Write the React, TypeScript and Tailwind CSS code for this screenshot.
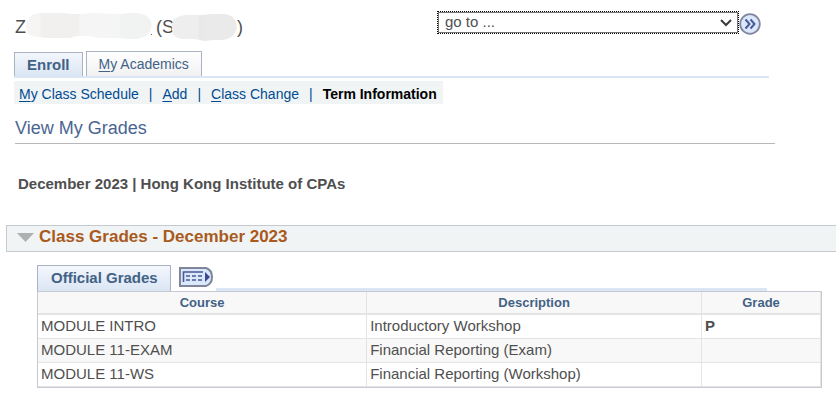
import type { ReactNode } from "react";

const grades = [
  { course: "MODULE INTRO", description: "Introductory Workshop", grade: "P" },
  { course: "MODULE 11-EXAM", description: "Financial Reporting (Exam)", grade: "" },
  { course: "MODULE 11-WS", description: "Financial Reporting (Workshop)", grade: "" },
];

function NavLink({ hotkey, children }: { hotkey: string; children: ReactNode }) {
  return (
    <a href="#" className="text-[#004b91]">
      <span className="underline underline-offset-2">{hotkey}</span>
      {children}
    </a>
  );
}

function Separator() {
  return <span className="px-[10px] text-[#004b91]">|</span>;
}

function Header() {
  return (
    <header className="flex items-start justify-between pl-[15px] pr-[75px] pt-[9px]">
      <h1 className="mt-[2px] flex h-8 items-center text-[18px] leading-8 text-[#4f4f4f]">
        <span>Z</span>
        {/* Hidden student name */}
        <svg className="h-7 w-[130px]" viewBox="0 0 130 28" aria-hidden="true">
          <defs>
            <linearGradient id="nameMask">
              <stop offset="0.1" stopColor="#f6f5f4" />
              <stop offset="0.13" stopColor="#f2f0ee" />
              <stop offset="0.42" stopColor="#f2f0ee" />
              <stop offset="0.43" stopColor="#f5f5f5" />
              <stop offset="0.73" stopColor="#f5f5f5" />
              <stop offset="0.76" stopColor="#f1f3f3" />
            </linearGradient>
          </defs>
          <path
            fill="url(#nameMask)"
            d="M2 7Q4 1 13 0h25l6 1h12l8-1 30 1 10-1h8q9 1 13 8 2 6-2 12-4 5-12 6h-9l-8-1H72l-8-2H50l-6 2H20l-7-1Q5 24 1 19l-1-6z"
          />
          <path d="M125 21h1v1h-1z" fill="#6b6b6b" />
        </svg>
        <span>(S</span>
        {/* Hidden student number */}
        <svg className="-ml-1 h-7 w-[69px]" viewBox="0 0 69 28" aria-hidden="true">
          <defs>
            <linearGradient id="idMask">
              <stop offset="0.4" stopColor="#eeeeee" />
              <stop offset="0.43" stopColor="#e8e8e8" />
              <stop offset="0.6" stopColor="#eaeaea" />
            </linearGradient>
          </defs>
          <path
            fill="url(#idMask)"
            d="M4 6Q8 3 15 2h18l8-1h14q8 1 11 8 2 6-1 11-4 6-12 7H43l-8 1-10-2H14Q6 26 3 21q-3-8 1-15z"
          />
        </svg>
        <span className="-ml-[2px]">)</span>
      </h1>

      <div className="flex items-center">
        <div className="relative">
          <select
            aria-label="go to"
            className="block h-[21px] w-[300px] appearance-none border border-[#767676] bg-white pl-[6px] text-[15px] leading-[18px] text-[#4f4f4f] outline-1 outline-dotted outline-black"
          >
            <option>go to ...</option>
          </select>
          <svg
            className="pointer-events-none absolute right-[6px] top-[7px] h-2 w-3"
            viewBox="0 0 12 8"
            fill="none"
            stroke="#3b3b3b"
            strokeWidth="2"
            aria-hidden="true"
          >
            <path d="M1 1l5 5 5-5" />
          </svg>
        </div>
        <button type="button" aria-label="Go" className="ml-px mt-1">
          <svg className="block size-[22px]" viewBox="0 0 22 22" fill="none" aria-hidden="true">
            <circle cx="11" cy="11" r="9.8" fill="#dbe7fb" stroke="#8087a0" strokeWidth="1.8" />
            <path d="M6.5 6.5l4 4.5-4 4.5M11.5 6.5l4 4.5-4 4.5" stroke="#4a5a96" strokeWidth="2" />
          </svg>
        </button>
      </div>
    </header>
  );
}

function Tabs() {
  return (
    <nav className="ml-[14px] mr-[67px] mt-2 flex items-end gap-[3px] border-b-2 border-[#dbe6f4]">
      <a
        href="#"
        className="border border-b-0 border-[#a9b3c4] bg-linear-to-b from-[#f3f6fc] to-[#dbe6f4] px-3 pt-px text-[15px] font-bold leading-[22px] text-[#426285]"
      >
        Enroll
      </a>
      <a
        href="#"
        className="border border-b-0 border-[#a9b3c4] bg-linear-to-b from-white to-[#f1f1f2] px-3 pt-px text-[14px] leading-[23px] text-[#426285]"
      >
        <span className="underline underline-offset-2">M</span>y Academics
      </a>
    </nav>
  );
}

function RowsIcon() {
  return (
    <svg className="block h-5 w-[34px]" viewBox="0 0 34 20" fill="none" aria-hidden="true">
      <path d="M1 1h26q6 2 6 9t-6 9H1z" fill="#dbe7fb" stroke="#7f869c" strokeWidth="2" />
      <path d="M4.500 15V5h19.500" stroke="#4a5a96" strokeWidth="1.600" />
      <path d="M7 9h4M13 9h4M19 9h4M7 13h4M13 13h4M19 13h4" stroke="#4a5a96" strokeWidth="1.500" />
      <path d="M26 5l5 5-5 5z" fill="#3d4b8c" />
    </svg>
  );
}

export default function App() {
  return (
    <div className="bg-white font-['Liberation_Sans',Arial,sans-serif] text-[#4f4f4f]">
      <Header />
      <Tabs />

      <nav className="ml-[14px] mt-[3px] flex w-fit whitespace-pre bg-[#f0f4f5] pl-[5px] pr-[6px] pt-[3px] text-[14px] leading-5">
        <NavLink hotkey="M">y Class Schedule</NavLink>
        <Separator />
        <NavLink hotkey="A">dd</NavLink>
        <Separator />
        <NavLink hotkey="C">lass Change</NavLink>
        <Separator />
        <span className="font-bold text-black">Term Information</span>
      </nav>

      <h2 className="ml-[15px] mr-[61px] mt-3 border-b border-[#b8b8b8] pb-[3px] text-[18px] leading-6 text-[#4a6592]">
        View My Grades
      </h2>

      <p className="mt-[30px] pl-[18px] text-[15px] font-bold leading-5">
        December 2023 | Hong Kong Institute of CPAs
      </p>

      <section className="mt-[31px]">
        <h3 className="ml-[6px] border-y border-l border-[#c5c9d1] bg-[#f0f4f5] pb-[3px] pl-[10px] text-[17px] font-bold leading-[22px] text-[#a95a1c]">
          <button type="button" className="flex items-center gap-1">
            <svg className="h-[9px] w-[18px]" viewBox="0 0 18 9" aria-hidden="true">
              <path d="M0 0h17L8.500 9z" fill="#aeb0b1" />
            </svg>
            Class Grades - December 2023
          </button>
        </h3>

        <div className="ml-[37px] mr-[14px] mt-[13px]">
          <div className="flex items-end">
            <button
              type="button"
              className="border border-b-0 border-[#a9b3c4] bg-linear-to-b from-[#f3f6fc] to-[#dbe6f4] pb-[2px] pl-[13px] pr-3 text-[15px] font-bold leading-[23px] text-[#426285]"
            >
              Official Grades
            </button>
            <button type="button" aria-label="Show all columns" className="mb-1 ml-2">
              <RowsIcon />
            </button>
            <div className="ml-[3px] mr-[55px] h-[3px] flex-1 bg-[#dbe6f4]" />
          </div>

          <div className="border border-[#c5c9d1]">
            <table className="w-full table-fixed border-collapse text-left text-[15px]">
              <colgroup>
                <col className="w-[42%]" />
                <col className="w-[42.8%]" />
                <col className="w-[15.2%]" />
              </colgroup>
              <thead>
                <tr className="border-b-2 border-[#e4e4e4] bg-[#f8f8f8] text-center text-[13px] leading-[21px] text-[#426285]">
                  <th className="border-r border-[#e4e4e4]">Course</th>
                  <th className="border-r border-[#e4e4e4]">Description</th>
                  <th className="border-r border-[#e4e4e4]">Grade</th>
                </tr>
              </thead>
              <tbody>
                {grades.map((row) => (
                  <tr key={row.course} className="h-6 border-b border-[#e4e4e4] leading-[21px] even:bg-[#f8f8f8]">
                    <td className="border-r border-[#e4e4e4] pb-[2px] pl-[3px]">{row.course}</td>
                    <td className="border-r border-[#e4e4e4] pb-[2px] pl-[3px]">{row.description}</td>
                    <td className="border-r border-[#e4e4e4] pb-[2px] pl-[3px] font-bold">{row.grade}</td>
                  </tr>
                ))}
              </tbody>
            </table>
          </div>
        </div>
      </section>
    </div>
  );
}
